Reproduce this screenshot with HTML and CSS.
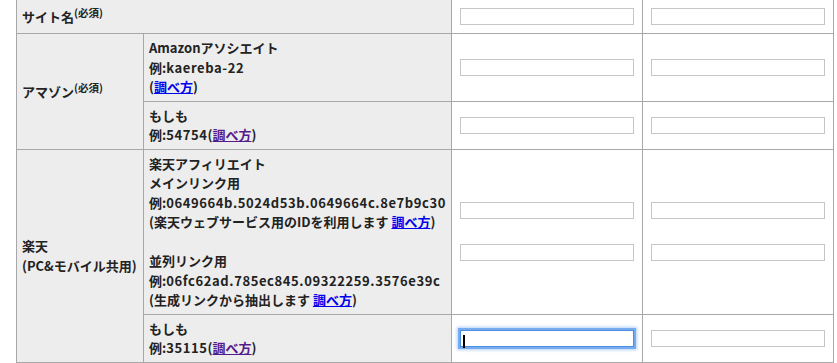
FILE: index.html
```html
<!DOCTYPE html>
<html lang="ja">
<head>
    <meta charset="UTF-8">
    <meta name="viewport" content="width=device-width, initial-scale=1.0">
    <title>サイト設定</title>
    <link rel="stylesheet" href="styles.css">
</head>
<body>
    <table class="settings">
        <colgroup>
            <col class="c-label">
            <col class="c-desc">
            <col class="c-field">
            <col class="c-field">
        </colgroup>
        <tr>
            <th colspan="2" class="label">サイト名<sup>(必須)</sup></th>
            <td><input type="text" class="field"></td>
            <td><input type="text" class="field"></td>
        </tr>
        <tr>
            <th rowspan="2" class="label">アマゾン<sup>(必須)</sup></th>
            <th class="desc">Amazonアソシエイト<br>例:<span class="code">kaereba-22</span><br>(<a href="#">調べ方</a>)</th>
            <td><input type="text" class="field"></td>
            <td><input type="text" class="field"></td>
        </tr>
        <tr>
            <th class="desc">もしも<br>例:<span class="code">54754</span>(<a href="#" class="seen">調べ方</a>)</th>
            <td><input type="text" class="field"></td>
            <td><input type="text" class="field"></td>
        </tr>
        <tr>
            <th rowspan="2" class="label">楽天<br>(PC&amp;モバイル共用)</th>
            <th class="desc">
                楽天アフィリエイト<br>
                メインリンク用<br>
                例:<span class="code">0649664b.5024d53b.0649664c.8e7b9c30</span><br>
                (楽天ウェブサービス用のIDを利用します <a href="#">調べ方</a>)<br>
                <br>
                並列リンク用<br>
                例:<span class="code">06fc62ad.785ec845.09322259.3576e39c</span><br>
                (生成リンクから抽出します <a href="#">調べ方</a>)
            </th>
            <td>
                <div class="stack">
                    <input type="text" class="field">
                    <input type="text" class="field">
                </div>
            </td>
            <td>
                <div class="stack">
                    <input type="text" class="field">
                    <input type="text" class="field">
                </div>
            </td>
        </tr>
        <tr>
            <th class="desc">もしも<br>例:<span class="code">35115</span>(<a href="#" class="seen">調べ方</a>)</th>
            <td>
                <div class="focus-wrap">
                    <input type="text" class="field focused">
                    <span class="caret"></span>
                </div>
            </td>
            <td><input type="text" class="field"></td>
        </tr>
    </table>
</body>
</html>
```

FILE: styles.css
```css
body {
    margin: 0;
    font-family: "Noto Sans CJK JP", sans-serif;
    font-size: 13px;
    color: #222;
    background-color: #fff;
}
.settings {
    border-collapse: collapse;
    table-layout: fixed;
    width: 818px;
    margin: -1px 0 0 16px;
}
.c-label {
    width: 127px;
}
.c-desc {
    width: 308px;
}
.c-field {
    width: 191px;
}
th, td {
    border: 1px solid #a8a8a8;
    padding: 4px 5px;
    text-align: left;
    vertical-align: middle;
    font-weight: bold;
    line-height: 19.5px;
}
th {
    background-color: #ededed;
    white-space: nowrap;
}
td {
    background-color: #fff;
}
.code {
    letter-spacing: 0.6px;
}
sup {
    font-size: 10.5px;
    line-height: 0;
    vertical-align: 5px;
}
a {
    color: #0000ee;
}
a.seen {
    color: #551a8b;
}
.field {
    display: block;
    box-sizing: border-box;
    width: 174px;
    height: 17px;
    margin: 4px 3px;
    padding: 0 2px;
    border: 1px solid #c6c6c6;
    background-color: #fff;
    font-size: 12px;
    outline: none;
}
.stack {
    display: flex;
    flex-direction: column;
    gap: 17px;
}
.focus-wrap {
    position: relative;
}
.field.focused {
    border: 1px solid #4a8fe2;
    box-shadow: 0 0 0 2px #76acef, 0 0 3px 3px #b3d1f6;
}
.caret {
    position: absolute;
    left: 6px;
    top: 5px;
    width: 1.5px;
    height: 13px;
    background-color: #000;
}
```
